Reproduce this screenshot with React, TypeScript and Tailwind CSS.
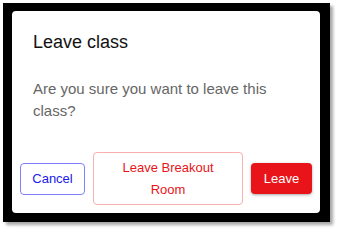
// Leave class dialog

export default function App() {
  return (
    <div className="w-[339px] h-[232px] bg-white pl-[3px] pt-[3px]" style={{ fontFamily: '"Liberation Sans", Arial, sans-serif' }}>
      <div className="w-[327px] h-[219px] bg-black pl-[9px] pt-[8px] shadow-[3px_3px_3px_rgba(0,0,0,0.35)]">
        <div className="w-[308px] h-[202px] bg-white rounded-[4px] flex flex-col">
          <h2 className="pt-[17px] px-[21px] text-[18px] leading-[28px] text-[#111]">Leave class</h2>
          <p className="mt-[22px] px-[21px] text-[15px] leading-[22px] text-[#666]">
            Are you sure you want to leave this class?
          </p>
          <div className="mt-auto mb-[8px] px-[8px] flex items-center justify-between">
            <button className="w-[65px] h-[32px] rounded-[4px] border border-[#8080ff] text-[13px] text-[#2020e8]">
              Cancel
            </button>
            <button className="w-[150px] h-[53px] rounded-[4px] border border-[#f7b0b0] text-[13px] leading-[22px] text-[#e8141a] px-[12px]">
              Leave Breakout Room
            </button>
            <button className="w-[61px] h-[31px] rounded-[4px] bg-[#e8141a] text-[13px] text-white shadow-[0_1px_3px_rgba(0,0,0,0.35)]">
              Leave
            </button>
          </div>
        </div>
      </div>
    </div>
  );
}
